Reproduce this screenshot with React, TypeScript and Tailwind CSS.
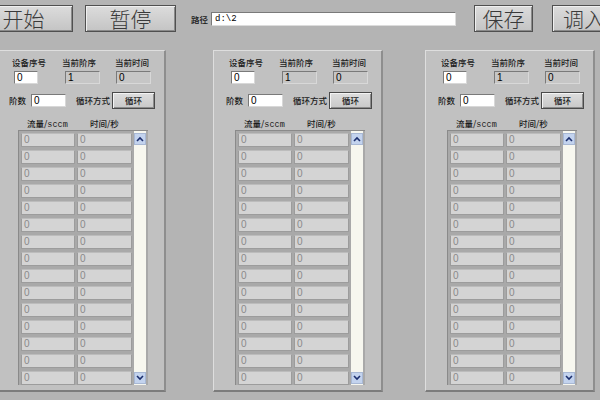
import React from 'react';

const CJK = "font-['Noto_Sans_CJK_SC','Noto_Sans',sans-serif]";

function BigButton({ label, className = '' }: { label: string; className?: string }) {
  return (
    <div
      className={`h-[27px] shrink-0 border border-[#505050] bg-gradient-to-b from-[#dcdcdc] to-[#c4c4c4] shadow-[inset_1px_1px_0_#f0f0f0,inset_-1px_-1px_0_#8a8a8a] flex items-center justify-center text-[21px] leading-none font-light text-[#3a3a3a] whitespace-nowrap ${className}`}
    >
      {label}
    </div>
  );
}

function Field({ value, white, className = '' }: { value: string; white?: boolean; className?: string }) {
  return (
    <div
      className={`h-[13px] shrink-0 border-t border-l border-t-[#7a7a7a] border-l-[#7a7a7a] border-r border-b border-r-[#d8d8d8] border-b-[#d8d8d8] ${
        white ? 'bg-white' : 'bg-[#c6c6c6]'
      } text-[10px] leading-[11px] pl-[2px] text-black font-['Liberation_Sans',sans-serif] ${className}`}
    >
      {value}
    </div>
  );
}

function Arrow({ up }: { up?: boolean }) {
  return (
    <div className="w-[12px] h-[12px] bg-[#c3d3ee] border border-[#a8b8d4] flex items-center justify-center">
      <svg width="8" height="6" viewBox="0 0 8 6">
        <path
          d={up ? 'M1 5 L4 2 L7 5' : 'M1 1 L4 4 L7 1'}
          fill="none"
          stroke="#1c2f6e"
          strokeWidth="1.6"
        />
      </svg>
    </div>
  );
}

function Panel({ className = '' }: { className?: string }) {
  const rows = Array.from({ length: 15 });
  return (
    <div
      className={`w-[170px] h-[342px] shrink-0 bg-[#c1c1c1] border-t border-l border-t-[#dedede] border-l-[#dedede] border-r-2 border-b-2 border-r-[#8e8e8e] border-b-[#7c7c7c] ${CJK} text-[8.5px] font-medium text-[#1a1a1a] whitespace-nowrap ${className}`}
    >
      <div className="flex pt-[5px] pl-[15px]">
        <div className="w-[51px] flex flex-col gap-[2px]">
          <span className="leading-[13px]">设备序号</span>
          <Field value="0" white className="w-[24px] ml-[2px]" />
        </div>
        <div className="w-[54px] flex flex-col gap-[2px]">
          <span className="leading-[13px]">当前阶序</span>
          <Field value="1" className="w-[35px] ml-[3px]" />
        </div>
        <div className="w-[50px] flex flex-col gap-[2px]">
          <span className="leading-[13px]">当前时间</span>
          <Field value="0" className="w-[35px] ml-[1px]" />
        </div>
      </div>

      <div className="flex items-center mt-[8px] pl-[12px] h-[17px]">
        <span className="w-[22px]">阶数</span>
        <Field value="0" white className="w-[35px]" />
        <span className="ml-[10px] w-[36px]">循环方式</span>
        <div className="w-[43px] h-[17px] border border-[#4a4a4a] bg-gradient-to-b from-[#dedede] to-[#c8c8c8] shadow-[inset_1px_1px_0_#f4f4f4,inset_-1px_-1px_0_#8c8c8c] flex items-center justify-center">
          循环
        </div>
      </div>

      <div className="flex mt-[9px] h-[11px] leading-[11px]">
        <span className="ml-[30px] w-[63px]">流量/<span className="font-['Liberation_Mono',monospace]">sccm</span></span>
        <span>时间/秒</span>
      </div>

      <div className="ml-[21px] mt-[1px] w-[130px] h-[255px] bg-[#a9a9a9] border-t border-l border-t-[#8a8a8a] border-l-[#8a8a8a] flex pl-[2px] pt-[2px]">
        <div className="flex flex-col gap-[3px]">
          {rows.map((_, i) => (
            <div key={i} className="flex gap-[2px]">
              <div className="w-[54px] h-[14px] bg-[#d4d4d4] border border-[#9c9c9c] border-t-[#bcbcbc] text-[10px] leading-[12px] pl-[2px] text-[#8a8a8a] font-normal font-['Liberation_Sans',sans-serif]">
                0
              </div>
              <div className="w-[55px] h-[14px] bg-[#d4d4d4] border border-[#9c9c9c] border-t-[#bcbcbc] text-[10px] leading-[12px] pl-[2px] text-[#8a8a8a] font-normal font-['Liberation_Sans',sans-serif]">
                0
              </div>
            </div>
          ))}
        </div>
        <div className="ml-[2px] -mt-[2px] w-[12px] h-[254px] bg-[#f7f7ef] flex flex-col justify-between pt-[2px] pb-[1px]">
          <Arrow up />
          <Arrow />
        </div>
      </div>
    </div>
  );
}

export default function App() {
  return (
    <div className={`w-[600px] h-[400px] overflow-hidden bg-[#b4b4b4] ${CJK}`}>
      <div className="flex items-start h-[50px] pt-[5px]">
        <BigButton label="开始" className="w-[91px] -ml-[18px] pr-[8px]" />
        <BigButton label="暂停" className="w-[91px] ml-[12px]" />
        <div className="flex items-center ml-[15px] mt-[7px] h-[14px]">
          <span className="text-[8.5px] font-medium text-[#1a1a1a] w-[20px]">路径</span>
          <div className="w-[245px] h-[14px] bg-white border-t border-l border-t-[#7a7a7a] border-l-[#7a7a7a] border-r border-b border-r-[#dcdcdc] border-b-[#dcdcdc] text-[9px] leading-[12px] pl-[3px] font-['Liberation_Mono',monospace]">
            d:\2
          </div>
        </div>
        <BigButton label="保存" className="w-[59px] ml-[18px]" />
        <BigButton label="调入" className="w-[59px] ml-[19px] justify-start pl-[10px]" />
      </div>

      <div className="flex">
        <Panel className="-ml-[4px]" />
        <Panel className="ml-[47px]" />
        <Panel className="ml-[42px]" />
      </div>
    </div>
  );
}
